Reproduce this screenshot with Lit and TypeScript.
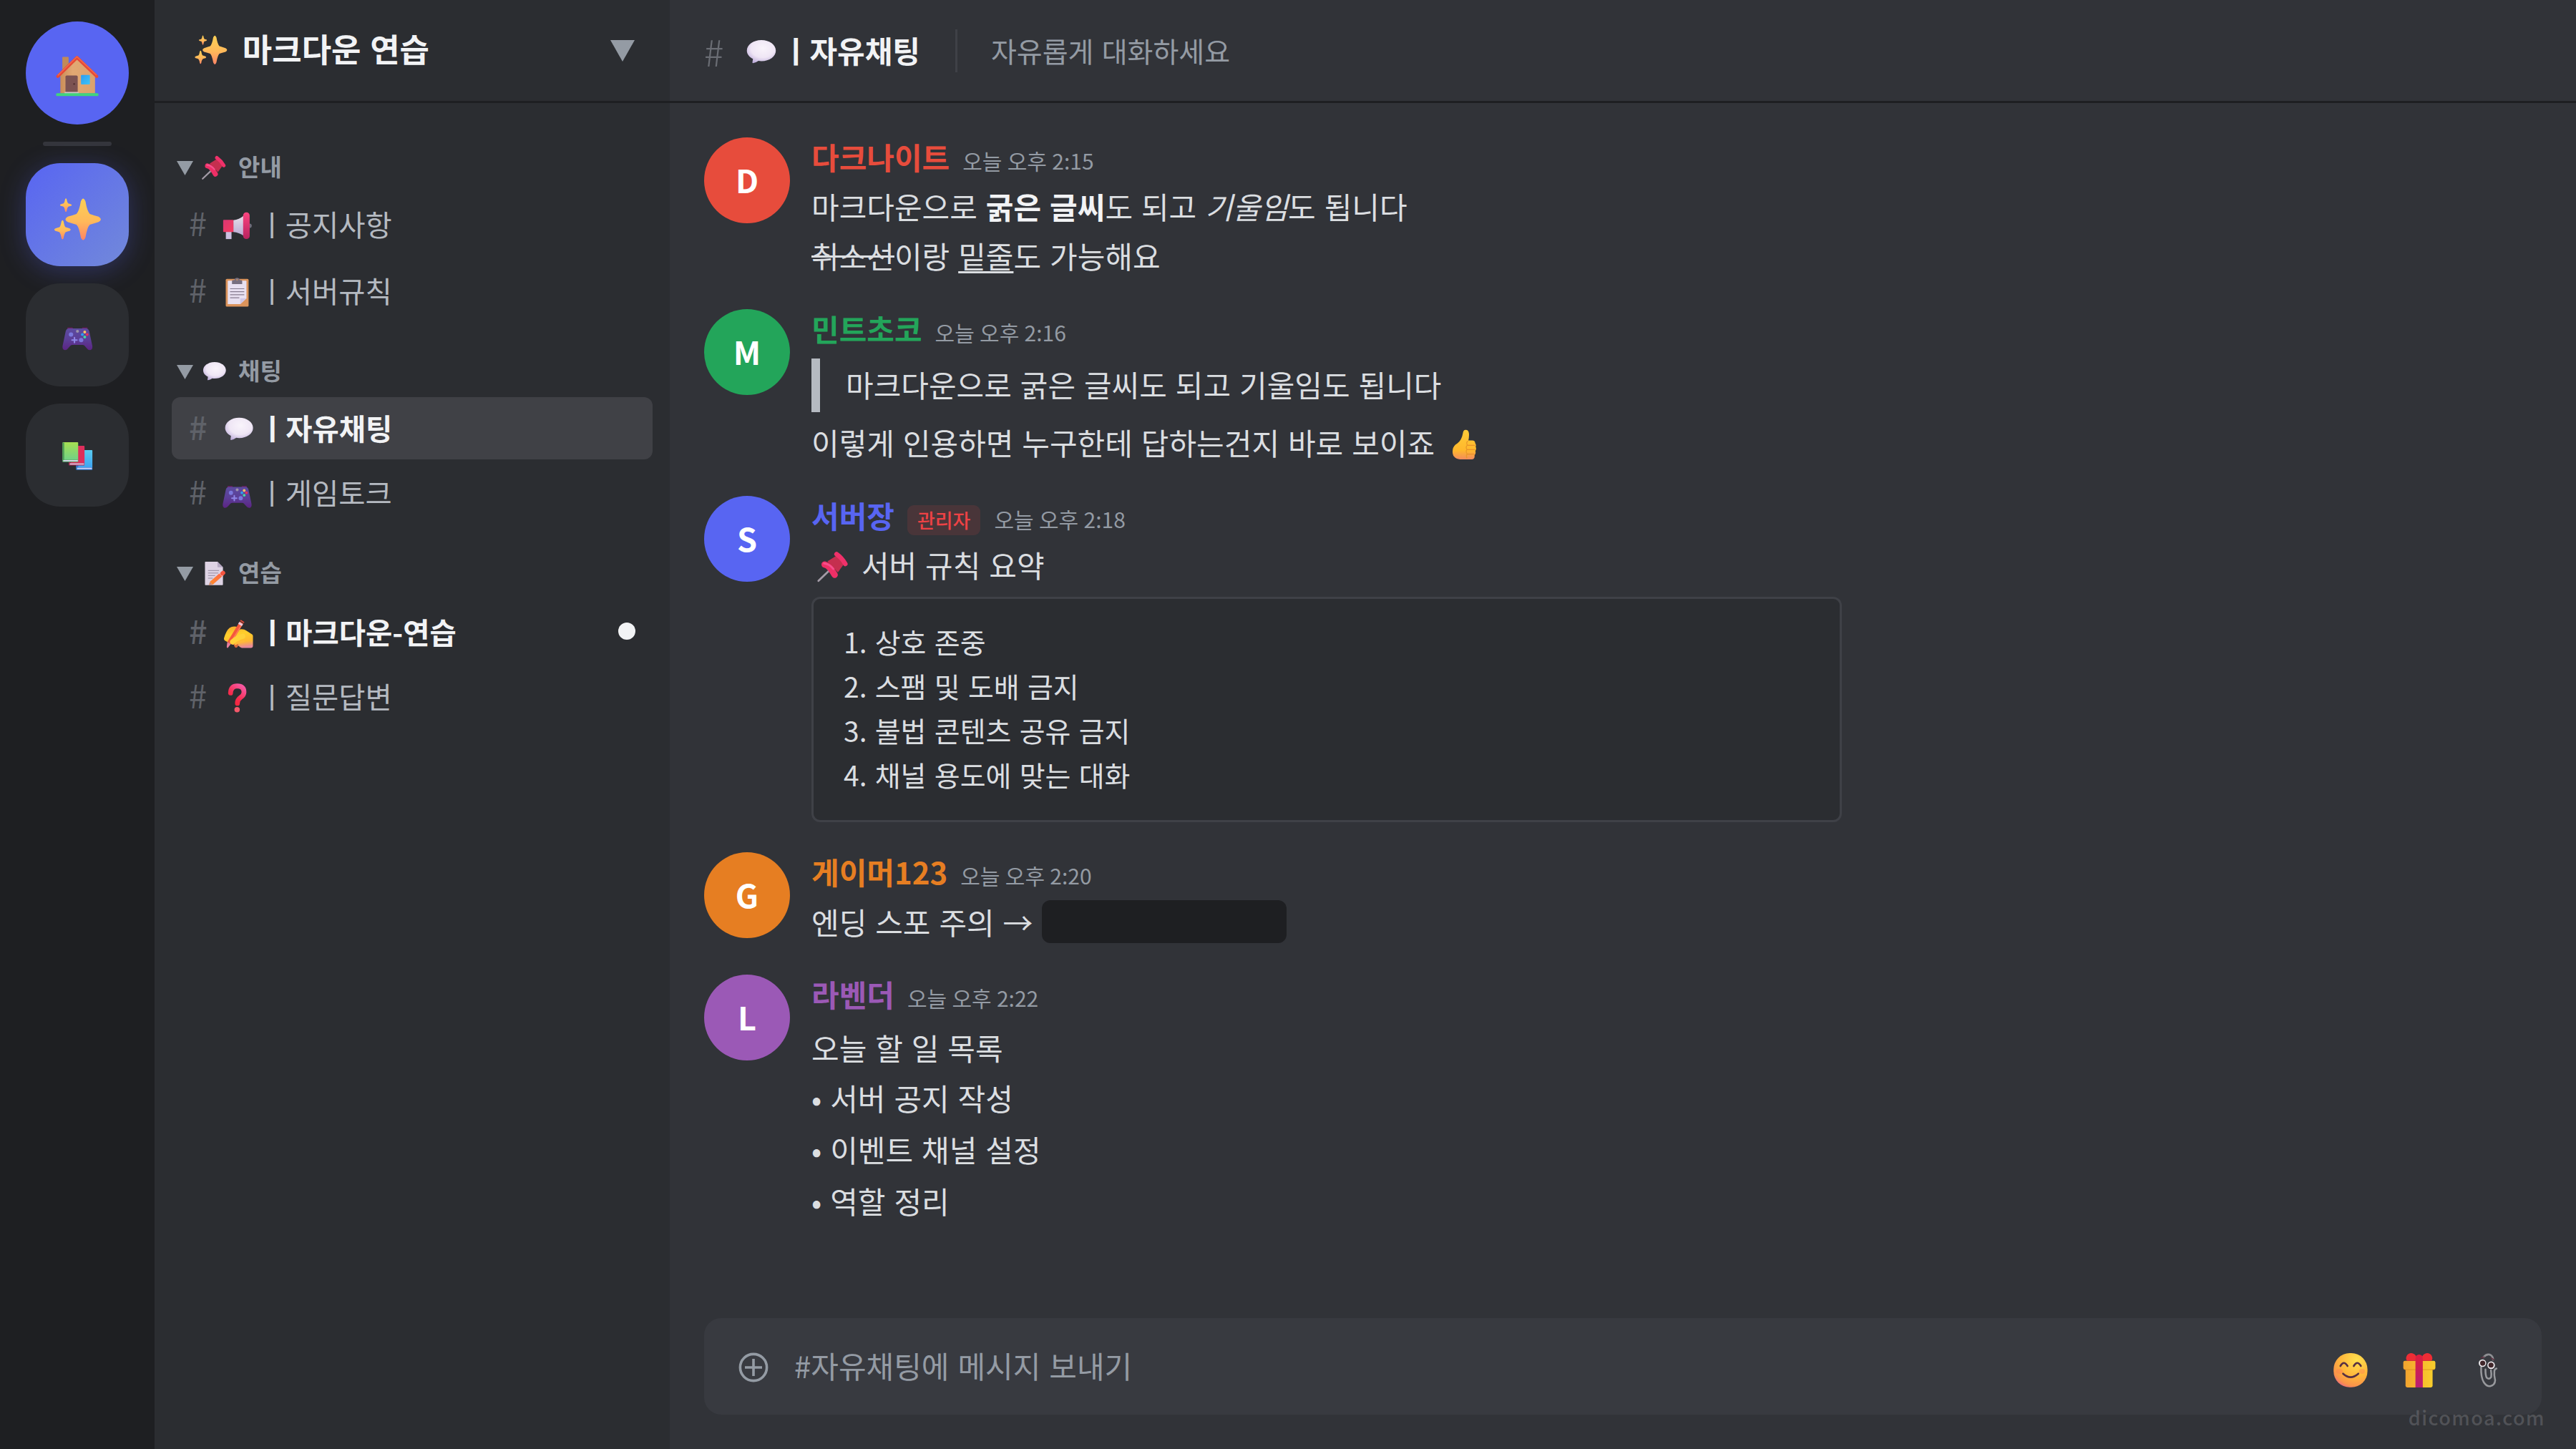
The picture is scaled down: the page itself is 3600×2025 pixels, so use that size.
import { LitElement, html, svg, css, nothing } from "lit";
import type { TemplateResult, SVGTemplateResult } from "lit";
import { customElement, property } from "lit/decorators.js";
import { classMap } from "lit/directives/class-map.js";

/* ---------- emoji artwork, all on a 32-unit grid ---------- */

const star = (cx: number, cy: number, rx: number, ry: number): string => {
  const tx = rx * 0.13;
  const ty = ry * 0.13;
  const wx = rx * 0.3;
  const wy = ry * 0.26;
  return [
    `M${cx - tx} ${cy - ry + ty}`,
    `Q${cx} ${cy - ry - ty} ${cx + tx} ${cy - ry + ty}`,
    `Q${cx + wx * 0.75} ${cy - wy * 1.5} ${cx + wx * 1.25} ${cy - wy}`,
    `Q${cx + rx * 0.6} ${cy - wy * 0.75} ${cx + rx - tx} ${cy - ty}`,
    `Q${cx + rx + tx} ${cy} ${cx + rx - tx} ${cy + ty}`,
    `Q${cx + rx * 0.6} ${cy + wy * 0.75} ${cx + wx * 1.25} ${cy + wy}`,
    `Q${cx + wx * 0.75} ${cy + wy * 1.5} ${cx + tx} ${cy + ry - ty}`,
    `Q${cx} ${cy + ry + ty} ${cx - tx} ${cy + ry - ty}`,
    `Q${cx - wx * 0.75} ${cy + wy * 1.5} ${cx - wx * 1.25} ${cy + wy}`,
    `Q${cx - rx * 0.6} ${cy + wy * 0.75} ${cx - rx + tx} ${cy + ty}`,
    `Q${cx - rx - tx} ${cy} ${cx - rx + tx} ${cy - ty}`,
    `Q${cx - rx * 0.6} ${cy - wy * 0.75} ${cx - wx * 1.25} ${cy - wy}`,
    `Q${cx - wx * 0.75} ${cy - wy * 1.5} ${cx - tx} ${cy - ry + ty}Z`,
  ].join("");
};

const ART: Record<string, SVGTemplateResult> = {
  home: svg`
    <defs>
      <linearGradient id="g" x1="0" x2="1"><stop offset="0" stop-color="#c98d58"/><stop offset=".35" stop-color="#e2a873"/><stop offset="1" stop-color="#dba26c"/></linearGradient>
      <linearGradient id="w" x1="0" x2="1" y2="1"><stop offset="0" stop-color="#2b9df0"/><stop offset="1" stop-color="#3fc4f8"/></linearGradient>
    </defs>
    <rect x="5.6" y="2.8" width="4.4" height="12" rx=".4" fill="#c18a58"/>
    <path d="M15.8 4.4 28.6 16.2V28.4H4.2V15.8Z" fill="url(#g)"/>
    <path d="M2.4 16.5 15.9 3.2 29.8 16.5" fill="none" stroke="#e64a36" stroke-width="2.2" stroke-linecap="round" stroke-linejoin="round"/>
    <path d="M2.6 15.6 15.9 2.6 29.4 15.4" fill="none" stroke="#f46a4c" stroke-width=".7" stroke-linecap="round" stroke-linejoin="round"/>
    <rect x="7.8" y="15.8" width="8.6" height="12.6" rx=".9" fill="#7c5352"/>
    <circle cx="13.9" cy="21.8" r=".6" fill="#4c2c2e"/>
    <rect x="18.7" y="15.5" width="6.3" height="6.7" rx=".5" fill="url(#w)"/>
    <rect x="7.2" y="27.4" width="9.8" height="1.2" fill="#cfc6cc"/>
    <rect x="1.2" y="28.3" width="29.8" height="2" rx=".8" fill="#41d47c"/>`,
  sparkles: svg`
    <defs><linearGradient id="g" x1="0" x2="0" y1="0" y2="1"><stop offset="0" stop-color="#fcd055"/><stop offset=".55" stop-color="#ffb95a"/><stop offset="1" stop-color="#ff8566"/></linearGradient></defs>
    <path d="${star(19.6, 16, 11.5, 13.5)}" fill="url(#g)"/>
    <path d="${star(8.4, 6.8, 3.8, 4.4)}" fill="url(#g)"/>
    <path d="${star(6.2, 22.8, 5.3, 6.2)}" fill="url(#g)"/>`,
  gamepad: svg`
    <defs><linearGradient id="g" x1="0" x2="0" y1="0" y2="1"><stop offset="0" stop-color="#5c4ba0"/><stop offset=".5" stop-color="#5b3f97"/><stop offset="1" stop-color="#5c2484"/></linearGradient></defs>
    <path d="M6.4 8.3h4.4M21.2 8.3h4.4" stroke="#6d1d63" stroke-width="1.2" stroke-linecap="round"/>
    <path d="M7.4 8.6H24.6Q27 8.6 27.8 11.4L31 26.4Q31.3 30.1 28.6 30.4 26.7 30.5 25.4 28.6L23 25.9Q22.3 25.2 21 25.2H11Q9.7 25.2 9 25.9L6.600 28.600Q5.300 30.500 3.400 30.400.7 30.100 1 26.400L4.200 11.400Q5 8.600 7.400 8.600Z" fill="url(#g)"/>
    <circle cx="9.5" cy="14.7" r="2.200" fill="#7a78dc"/><circle cx="19.700" cy="20.300" r="2.200" fill="#7a78dc"/>
    <path d="M10.500 20.300h5M13 17.800v5" stroke="#8f86e8" stroke-width="1.500" stroke-linecap="round"/>
    <circle cx="16" cy="11.500" r="1.500" fill="#9c93ab"/>
    <circle cx="23.300" cy="12.300" r="1.450" fill="#f9c166"/><circle cx="20.900" cy="14.700" r="1.400" fill="#2f9ef0"/>
    <circle cx="25.700" cy="14.700" r="1.400" fill="#e2315f"/><circle cx="23.300" cy="17.200" r="1.450" fill="#45d6a4"/>`,
  books: svg`
    <defs>
      <linearGradient id="g" x1="0" x2="0" y1="0" y2="1"><stop offset="0" stop-color="#a6e052"/><stop offset="1" stop-color="#6bd08c"/></linearGradient>
      <linearGradient id="b" x1="0" x2="0" y1="0" y2="1"><stop offset="0" stop-color="#5accf0"/><stop offset="1" stop-color="#3a9ff2"/></linearGradient>
    </defs>
    <rect x="14.800" y="10" width="16.200" height="19.900" rx=".6" fill="url(#b)"/>
    <path d="M14.800 25h2v2.400h14v2.500h-16Z" fill="#3572cf"/>
    <rect x="15.600" y="27.800" width="14.900" height="1.400" fill="#cfd6f6"/>
    <rect x="7.500" y="5.800" width="15.600" height="19.600" rx=".6" fill="#de2f5c"/>
    <path d="M7.500 20h2v3h13.500v2.400H7.500Z" fill="#a3234f"/>
    <rect x="8.300" y="23.400" width="14.400" height="1.300" fill="#e6cfe6"/>
    <rect x="1" y="2.200" width="15.700" height="19.800" rx=".6" fill="url(#g)"/>
    <path d="M1 2.600h1.700v17.200h14v2.200H1Z" fill="#4d9b58"/>
    <rect x="1.700" y="20.100" width="14.700" height="1.300" fill="#d9dcf0"/>`,
  pin: svg`
    <path d="M2 30 12.500 20" stroke="#a39ba6" stroke-width="2" stroke-linecap="round"/>
    <path d="M11 10.500 20.500 4.500 28 12.500 21.500 21.500Z" fill="#c52f4f"/>
    <path d="M8.200 13.600Q13 14.500 18.300 24" fill="none" stroke="#ee2f66" stroke-width="6.400" stroke-linecap="round"/>
    <path d="M7.600 12.500Q13 13 17 18" fill="none" stroke="#f5508c" stroke-width="2" stroke-linecap="round"/>
    <path d="M20.200 3.200Q25.500 7 29 13" fill="none" stroke="#f0316a" stroke-width="4.600" stroke-linecap="round"/>`,
  megaphone: svg`
    <defs>
      <linearGradient id="g" x1="0" x2="0" y1="0" y2="1"><stop offset="0" stop-color="#fb4580"/><stop offset="1" stop-color="#b8225f"/></linearGradient>
      <linearGradient id="b" x1="0" x2="1" y1="0" y2="1"><stop offset="0" stop-color="#d93673"/><stop offset="1" stop-color="#f63b5f"/></linearGradient>
      <linearGradient id="c" x1="0" x2="0" y1="0" y2="1"><stop offset="0" stop-color="#e6dee8"/><stop offset="1" stop-color="#b9abd4"/></linearGradient>
    </defs>
    <circle cx="28.900" cy="16" r="2.300" fill="#6f6c7a"/>
    <path d="M4.200 22h5.900v7.900H4.200Z" fill="#cbbfe0"/>
    <path d="M12 10.200Q18 9.500 22.800 5.600V26.400Q18 23 12 22.500Z" fill="url(#c)"/>
    <rect x="1.400" y="9.800" width="10.700" height="12.700" rx=".7" fill="url(#b)"/>
    <rect x="22.200" y="2.100" width="6.800" height="27.800" rx="3.300" fill="url(#g)"/>`,
  clipboard: svg`
    <rect x="4.100" y="2" width="23.800" height="29" rx="1.200" fill="#dc945c"/>
    <path d="M6.200 4.600Q6.200 4 6.900 4H25Q25.700 4 25.700 4.600V22.300L19.200 28.300H6.200Z" fill="#e8e0f1"/>
    <path d="M19.200 28.300V22.300H25.700Z" fill="#d0c6e6"/>
    <path d="M8.600 12.300H23.400M8.600 15.400H23.400M8.600 18.500H23.400M8.600 21.700H18.200" stroke="#857b90" stroke-width=".85"/>
    <path d="M10.600 7.500V4.300Q10.600 3.500 12 3.400L13.200 3.200Q13.600 1 15.900 1 18.200 1 18.600 3.200L19.800 3.400Q21.200 3.500 21.200 4.300V7.500Z" fill="#786f80"/>
    <circle cx="15.900" cy="3" r=".9" fill="#b78963"/>`,
  bubble: svg`
    <defs><radialGradient id="g" cx=".55" cy=".35" r=".68"><stop offset="0" stop-color="#f9f4fb"/><stop offset=".6" stop-color="#efe6f5"/><stop offset="1" stop-color="#bfaedb"/></radialGradient></defs>
    <path d="M17.300 3.600C25.500 3.600 31.800 8.300 31.800 14.200S25.500 24.800 17.300 24.800Q15.600 24.800 14.300 24.500 11.700 26.500 8.900 26.800 8 26.800 8.300 25.800L8.800 22.500C5 20.600 2.700 17.600 2.700 14.200 2.700 8.300 9.100 3.600 17.300 3.600Z" fill="url(#g)"/>`,
  memo: svg`
    <defs><linearGradient id="p" x1="1" x2="0" y1="0" y2="1"><stop offset="0" stop-color="#ff6a45"/><stop offset="1" stop-color="#ff8a2e"/></linearGradient></defs>
    <path d="M5 1.700Q5 1 5.700 1H21L28 8V30Q28 30.800 27.300 30.800H5.700Q5 30.800 5 30Z" fill="#ded3e4"/>
    <path d="M21 1V7.200Q21 8 21.800 8H28Z" fill="#b5a8c2"/>
    <path d="M9 12.200H23M9 15.400H22M9 18.600H18M9 22H15" stroke="#93889e" stroke-width=".9"/>
    <path d="M13 28.500 25.500 17.500" stroke="url(#p)" stroke-width="5.200"/>
    <path d="M25 18 27 16.200" stroke="#f0cfdc" stroke-width="5.400"/>
    <path d="M27.300 16 28.200 15.200" stroke="#f4543f" stroke-width="5.400" stroke-linecap="round"/>
    <path d="M11.300 26.600 14.800 30.400 9.800 31Z" fill="#c98a72"/>`,
  writing: svg`
    <defs><linearGradient id="g" x1=".3" x2=".5" y1="0" y2="1"><stop offset="0" stop-color="#f5ac2c"/><stop offset=".35" stop-color="#ffcf2b"/><stop offset=".75" stop-color="#ffb931"/><stop offset="1" stop-color="#e88a9a"/></linearGradient></defs>
    <path d="M1.600 20.500Q4 12.500 7.300 10 10.500 7.800 14.500 8.800L18 11.500Q22 10.800 25 13L31 17Q31.700 17.600 31.700 18.600V28.500Q31.700 30.900 29.500 30.900H21.500Q18.500 30.900 17 28.800L9 27 3.500 23.800Q1 23 1.600 20.500Z" fill="url(#g)"/>
    <path d="M11.800 26.500h4.600q0 4-2.300 4.300-2.200-.3-2.300-4.300Z" fill="#d9683e"/>
    <path d="M6.800 25.800 19.800 4.500" stroke="#f5573c" stroke-width="4.200"/>
    <path d="M8 26.400 19.500 7.500" stroke="#ff7d55" stroke-width="1.200"/>
    <path d="M18.200 7 19.400 5" stroke="#ecc6dc" stroke-width="4.500"/>
    <path d="M20.200 3.900 20.900 2.800" stroke="#ee4b36" stroke-width="4.500" stroke-linecap="butt"/>
    <path d="M5 24.700 8.600 26.900 5.300 31.200Q4 30.500 4.400 29Z" fill="#e87f9c"/>
    <path d="M10.500 24.500Q15.500 20 21 18.800" stroke="#ffd23a" stroke-width="5.400" fill="none" stroke-linecap="round"/>
    <path d="M13.500 27Q17 24.500 22 24" stroke="#ffba3a" stroke-width="2" fill="none" stroke-linecap="round"/>`,
  question: svg`
    <defs><linearGradient id="g" x1=".8" x2=".2" y1="0" y2="1"><stop offset="0" stop-color="#f6569e"/><stop offset=".6" stop-color="#f52d50"/><stop offset="1" stop-color="#f5253c"/></linearGradient></defs>
    <path d="M9.100 10.800Q9.500 3.500 16 3.500 23.100 3.700 23.100 9.800 23.100 13 19.500 15.500 16.200 17.800 16.200 21.600" fill="none" stroke="url(#g)" stroke-width="5" stroke-linecap="round"/>
    <circle cx="15.900" cy="28.100" r="2.800" fill="#f4586a"/>`,
  thumb: svg`
    <defs><linearGradient id="g" x1="0" x2="0" y1="0" y2="1"><stop offset="0" stop-color="#ffcc38"/><stop offset=".7" stop-color="#ffb72c"/><stop offset="1" stop-color="#f28b5e"/></linearGradient></defs>
    <path d="M17.400 1.300Q20.400 1.200 20.800 5 21 8.500 20.200 11.800H24Q27 12 27 14.500 28.300 16 27.500 18.300 28.600 20 27.200 22.500 28 25 26.400 26.600 26.900 30.800 23.500 30.900H12Q4.400 30 4.300 23.500 4.200 17.500 9 15 13.500 11.500 14.600 5 15 1.400 17.400 1.300Z" fill="url(#g)"/>
    <path d="M19.500 16.800H26.500M19 21.200H26.500M19 25.600H26" stroke="#e8912a" stroke-width=".9" stroke-linecap="round"/>
    <path d="M19.800 12.500Q17.500 14 19.200 16.500 17 18.500 18.800 21 17.200 23 18.900 25.500 17.500 27.500 18.800 29.800" fill="none" stroke="#e8982a" stroke-width=".9"/>`,
  smile: svg`
    <defs><radialGradient id="g" cx=".68" cy=".2" r=".9"><stop offset="0" stop-color="#ffe04d"/><stop offset=".55" stop-color="#ffb53b"/><stop offset=".85" stop-color="#f9934a"/><stop offset="1" stop-color="#e8648a"/></radialGradient></defs>
    <rect x=".8" y=".7" width="30.400" height="30.600" rx="14.400" fill="url(#g)"/>
    <ellipse cx="6" cy="17" rx="3" ry="2.400" fill="#ff7a55" opacity=".4"/><ellipse cx="26.300" cy="17" rx="2.600" ry="2.200" fill="#ff7a55" opacity=".4"/>
    <path d="M6.900 12.200Q9.900 6.800 13.300 12.200M18.900 12.200Q22 6.800 25.300 12.200M9.300 19.100Q16 25.300 23 19.100" fill="none" stroke="#573043" stroke-width="1.700" stroke-linecap="round"/>`,
  gift: svg`
    <defs>
      <linearGradient id="g" x1="0" x2="1"><stop offset="0" stop-color="#f2a32f"/><stop offset=".4" stop-color="#f7b42e"/><stop offset="1" stop-color="#f8ce2c"/></linearGradient>
      <linearGradient id="r" x1="0" x2="0" y1="0" y2="1"><stop offset="0" stop-color="#dd1f3c"/><stop offset="1" stop-color="#b81f74"/></linearGradient>
    </defs>
    <rect x="3.700" y="13" width="24.300" height="18.500" rx="1.600" fill="url(#g)"/>
    <rect x="1.700" y="7.600" width="28.800" height="7.800" rx="1.500" fill="url(#g)"/>
    <path d="M3 15.500H29.300" stroke="#d98a24" stroke-width=".5"/>
    <path d="M5 7.500Q3.500 5.500 4.800 3 6.500.3 9.800.8 12.500 1.500 13.500 4V7.500ZM27 7.500Q28.500 5.500 27.200 3 25.500.3 22.200.8 19.500 1.500 18.500 4V7.500Z" fill="#ee2d35"/>
    <path d="M12.600 31.500V6Q12.600 2 15.900 2T19.200 6V31.500Z" fill="url(#r)"/>`,
  clip: svg`
    <path d="M11.900 4.400Q15.500 .4 18.800 2.600 20.600 4 20.700 6.500" fill="none" stroke="#8e8f93" stroke-width="1.700" stroke-linecap="round"/>
    <path d="M9.900 13.400Q9.600 22.500 12.300 26.800 14.700 30.600 18 30.400 22.300 29.500 22.500 25 21.300 20.500 21.800 16.500 22.300 14.700 23.700 14.400" fill="none" stroke="#98999d" stroke-width="1.600" stroke-linecap="round"/>
    <path d="M13.800 15.200Q13.700 20.500 14.900 22.700 17 24.800 18.900 22.200 19.300 19 18.700 16" fill="none" stroke="#98999d" stroke-width="1.600" stroke-linecap="round"/>
    <path d="M10.200 4.900 12.600 4.200M18.900 5.200 21.300 6.600" stroke="#5c3040" stroke-width="1.100" stroke-linecap="round"/>
    <circle cx="11.100" cy="9.600" r="3.400" fill="#e9e6ea"/><circle cx="11.300" cy="9.700" r="2.300" fill="#40262a"/>
    <circle cx="18.900" cy="11.500" r="3.400" fill="#e9e6ea"/><circle cx="18.800" cy="11.400" r="2.300" fill="#40262a"/>`,
};

@customElement("ui-emoji")
export class UiEmoji extends LitElement {
  @property() name = "";

  static styles = css`
    :host {
      display: inline-flex;
      justify-content: center;
      width: 1.38em;
      height: 1.06em;
      vertical-align: -0.17em;
      flex: none;
    }
    .art {
      display: block;
      width: 1.06em;
      height: 1.06em;
      flex: none;
      overflow: visible;
    }
  `;

  render() {
    return html`<svg class="art" viewBox="0 0 32 32">${ART[this.name] ?? nothing}</svg>`;
  }
}

const emoji = (name: string): TemplateResult => html`<ui-emoji name=${name}></ui-emoji>`;

/* ---------- data ---------- */

interface Channel {
  icon: string;
  name: string;
  state?: "active" | "unread";
}
interface Category {
  icon: string;
  name: string;
  channels: Channel[];
}
interface Message {
  initial: string;
  author: string;
  tone: string;
  time: string;
  badge?: string;
  body: TemplateResult;
}

const CATEGORIES: Category[] = [
  {
    icon: "pin",
    name: "안내",
    channels: [
      { icon: "megaphone", name: "공지사항" },
      { icon: "clipboard", name: "서버규칙" },
    ],
  },
  {
    icon: "bubble",
    name: "채팅",
    channels: [
      { icon: "bubble", name: "자유채팅", state: "active" },
      { icon: "gamepad", name: "게임토크" },
    ],
  },
  {
    icon: "memo",
    name: "연습",
    channels: [
      { icon: "writing", name: "마크다운-연습", state: "unread" },
      { icon: "question", name: "질문답변" },
    ],
  },
];

const MESSAGES: Message[] = [
  {
    initial: "D",
    author: "다크나이트",
    tone: "red",
    time: "오늘 오후 2:15",
    body: html`
      <div class="line">마크다운으로 <b class="bold">굵은 글씨</b>도 되고 <i>기울임</i>도 됩니다</div>
      <div class="line"><s class="strike">취소선</s>이랑 <u class="under">밑줄</u>도 가능해요</div>
    `,
  },
  {
    initial: "M",
    author: "민트초코",
    tone: "green",
    time: "오늘 오후 2:16",
    body: html`
      <div class="quote">마크다운으로 굵은 글씨도 되고 기울임도 됩니다</div>
      <div class="line">이렇게 인용하면 누구한테 답하는건지 바로 보이죠 ${emoji("thumb")}</div>
    `,
  },
  {
    initial: "S",
    author: "서버장",
    tone: "blue",
    time: "오늘 오후 2:18",
    badge: "관리자",
    body: html`
      <div class="line">${emoji("pin")} 서버 규칙 요약</div>
      <div class="code">
        <div>1. 상호 존중</div>
        <div>2. 스팸 및 도배 금지</div>
        <div>3. 불법 콘텐츠 공유 금지</div>
        <div>4. 채널 용도에 맞는 대화</div>
      </div>
    `,
  },
  {
    initial: "G",
    author: "게이머123",
    tone: "orange",
    time: "오늘 오후 2:20",
    body: html`<div class="line spoil">엔딩 스포 주의 → <span class="spoiler"></span></div>`,
  },
  {
    initial: "L",
    author: "라벤더",
    tone: "purple",
    time: "오늘 오후 2:22",
    body: html`
      <div class="list">
        <div class="line">오늘 할 일 목록</div>
        <div class="bullet">• 서버 공지 작성</div>
        <div class="bullet">• 이벤트 채널 설정</div>
        <div class="bullet">• 역할 정리</div>
      </div>
    `,
  },
];

@customElement("app-root")
export class AppRoot extends LitElement {
  static styles = css`
    :host {
      display: grid;
      grid-template-columns: 216px 720px 1fr;
      position: relative;
      width: 3600px;
      height: 2025px;
      overflow: hidden;
      background: #313338;
      color: #dbdee1;
      font-family: "Noto Sans CJK KR", "Noto Sans", sans-serif;
      font-size: 42px;
      word-spacing: 0.06em;
      white-space: nowrap;
    }
    * {
      box-sizing: border-box;
    }

    /* server rail */
    .rail {
      display: flex;
      flex-direction: column;
      align-items: center;
      gap: 24px;
      padding-top: 30px;
      background: #1e1f22;
    }
    .server {
      display: flex;
      align-items: center;
      justify-content: center;
      width: 144px;
      height: 144px;
      border-radius: 48px;
      background: #2b2d31;
      font-size: 42px;
      padding-top: 3px;
    }
    .server.home {
      border-radius: 50%;
      background: #5865f2;
      font-size: 60px;
      padding-top: 7px;
    }
    .server.current {
      background: linear-gradient(135deg, #5865f2, #7289da);
      box-shadow: 0 6px 36px rgba(88, 101, 242, 0.3);
      font-size: 65px;
      padding-top: 13px;
    }
    .divider {
      width: 96px;
      height: 6px;
      border-radius: 3px;
      background: #35363c;
    }

    /* channel sidebar */
    .sidebar {
      display: flex;
      flex-direction: column;
      background: #2b2d31;
    }
    .bar {
      display: flex;
      align-items: center;
      flex: none;
      height: 144px;
      border-bottom: 3px solid #1e1f22;
      padding: 0 48px;
    }
    .guild {
      justify-content: space-between;
      font-size: 45px;
      font-weight: 700;
      color: #f2f3f5;
    }
    .guild-name {
      padding-bottom: 7px;
    }
    .caret {
      flex: none;
      display: block;
      fill: #949ba4;
    }
    .caret.big {
      width: 34px;
      height: 30px;
      margin-right: 1px;
    }
    .caret.small {
      width: 23px;
      height: 20px;
      margin-right: 6px;
      margin-top: 2px;
    }
    .categories {
      display: flex;
      flex-direction: column;
      gap: 45px;
      padding: 66px 24px 0;
    }
    .category:nth-child(3) .cat-head {
      margin-bottom: 15px;
    }
    .cat-head {
      display: flex;
      align-items: center;
      height: 48px;
      margin-bottom: 12px;
      padding-left: 7px;
      font-size: 33px;
      font-weight: 700;
      line-height: 48px;
      color: #949ba4;
    }
    .cat-name {
      padding-left: 11.5px;
      padding-bottom: 5px;
    }
    .channels {
      display: flex;
      flex-direction: column;
      gap: 3px;
    }
    .category:first-child .channels {
      gap: 6px;
    }
    .channel {
      display: flex;
      align-items: center;
      height: 87px;
      padding: 0 24px;
      border-radius: 12px;
      font-size: 40.5px;
      line-height: 60px;
      color: #b5bac1;
    }
    .channel-name {
      padding-bottom: 1px;
    }
    .channel-name ui-emoji {
      margin-right: 1.5px;
    }
    .hash {
      flex: none;
      font-size: 45px;
      color: #5f6269;
      padding-bottom: 6px;
      margin-right: 15px;
    }
    .channel.active {
      background: #404146;
    }
    .channel.active,
    .channel.unread {
      color: #f2f3f5;
      font-weight: 700;
    }
    .channel.active .hash,
    .channel.unread .hash {
      font-weight: 500;
    }
    .dot {
      width: 24px;
      height: 24px;
      margin-left: auto;
      margin-bottom: 3px;
      border-radius: 50%;
      background: #f2f3f5;
    }

    /* chat column */
    .chat {
      display: flex;
      flex-direction: column;
      min-width: 0;
    }
    .chat-hash {
      font-size: 51px;
      color: #6a6d74;
      font-weight: 300;
      margin-right: 22px;
    }
    .chat-title {
      font-weight: 700;
      color: #f2f3f5;
      padding-bottom: 2px;
    }
    .chat-title ui-emoji {
      margin-right: 1.5px;
    }
    .rule {
      width: 3px;
      height: 60px;
      margin: 0 47px 0 49px;
      background: #3f4147;
    }
    .topic {
      font-size: 39px;
      color: #949ba4;
      padding-bottom: 1px;
    }
    .messages {
      display: flex;
      flex-direction: column;
      gap: 40px;
      flex: 1;
      padding: 48px 48px 0;
    }
    .message {
      display: flex;
      gap: 30px;
      min-height: 120px;
    }
    .avatar {
      flex: none;
      display: flex;
      align-items: center;
      justify-content: center;
      width: 120px;
      height: 120px;
      border-radius: 50%;
      font-size: 45px;
      font-weight: 700;
      color: #fff;
      padding-bottom: 4px;
    }
    .avatar.red { background: #e74c3c; }
    .avatar.green { background: #23a55a; }
    .avatar.blue { background: #5865f2; }
    .avatar.orange { background: #e67e22; }
    .avatar.purple { background: #9b59b6; }
    .author.red { color: #e74c3c; }
    .author.green { color: #23a55a; }
    .author.blue { color: #5865f2; }
    .author.orange { color: #e67e22; }
    .author.purple { color: #9b59b6; }
    .content {
      flex: 1;
    }
    .head {
      display: flex;
      align-items: baseline;
      gap: 18px;
      height: 62px;
      line-height: 53px;
    }
    .author {
      font-weight: 600;
    }
    .badge {
      display: inline-block;
      padding: 0 14px;
      border-radius: 9px;
      background: rgba(237, 66, 69, 0.13);
      color: #ed4245;
      font-size: 27px;
      font-weight: 500;
      line-height: 42px;
      margin-right: 1px;
    }
    .time {
      font-size: 30px;
      word-spacing: 0.02em;
      color: #949ba4;
    }
    .line {
      height: 69px;
      line-height: 68px;
    }
    .bold {
      font-weight: 700;
      color: #f2f3f5;
    }
    .strike {
      text-decoration-thickness: 3px;
    }
    .under {
      text-decoration-thickness: 3px;
      text-underline-offset: 4px;
      text-decoration-skip-ink: none;
    }
    .quote {
      height: 75px;
      margin: 7px 0 8px;
      border-left: 12px solid #b5bac1;
      padding-left: 36px;
      line-height: 72px;
    }
    .code {
      width: 1440px;
      height: 315px;
      margin: 10px 0 2px;
      padding: 28px 42px 0;
      border: 3px solid #3f4147;
      border-radius: 12px;
      background: #2b2d31;
      font-size: 39px;
      line-height: 62px;
    }
    .spoil {
      display: flex;
      align-items: center;
      white-space: pre;
    }
    .spoiler {
      width: 342px;
      height: 60px;
      border-radius: 12px;
      background: #1e1f22;
    }
    .list {
      padding-top: 6px;
    }
    .bullet {
      height: 72px;
      line-height: 70px;
    }

    /* composer */
    .composer {
      display: flex;
      align-items: center;
      height: 135px;
      margin: 0 48px 48px;
      padding: 0 45px 0 48px;
      border-radius: 24px;
      background: #383a40;
      color: #949ba4;
    }
    .plus {
      flex: none;
      width: 42px;
      height: 42px;
      margin-right: 36px;
      margin-top: 3px;
      fill: none;
      stroke: #949ba4;
      stroke-width: 3.6;
    }
    .placeholder {
      flex: 1;
      padding-bottom: 4px;
    }
    .tools {
      display: flex;
      gap: 36px;
      font-size: 47px;
      padding-top: 11px;
    }
    .tool {
      display: flex;
      justify-content: center;
      width: 60px;
    }
    .watermark {
      position: absolute;
      right: 43px;
      bottom: 22px;
      font-size: 27px;
      font-weight: 500;
      line-height: 44px;
      letter-spacing: 1.5px;
      color: rgba(255, 255, 255, 0.17);
    }
  `;

  private renderCaret(size: string) {
    return html`<svg class="caret ${size}" viewBox="0 0 34 30" preserveAspectRatio="none">
      <path d="M0 0H34L17 30Z" />
    </svg>`;
  }

  private renderChannel(channel: Channel) {
    const classes = {
      channel: true,
      active: channel.state === "active",
      unread: channel.state === "unread",
    };
    return html`<div class=${classMap(classes)}>
      <span class="hash">#</span>
      <span class="channel-name">${emoji(channel.icon)}ㅣ${channel.name}</span>
      ${channel.state === "unread" ? html`<span class="dot"></span>` : nothing}
    </div>`;
  }

  private renderCategory(category: Category) {
    return html`<section class="category">
      <div class="cat-head">
        ${this.renderCaret("small")}${emoji(category.icon)}<span class="cat-name">${category.name}</span>
      </div>
      <div class="channels">${category.channels.map((c) => this.renderChannel(c))}</div>
    </section>`;
  }

  private renderMessage(m: Message) {
    return html`<article class="message">
      <div class="avatar ${m.tone}">${m.initial}</div>
      <div class="content">
        <div class="head">
          <span class="author ${m.tone}">${m.author}</span>
          ${m.badge ? html`<span class="badge">${m.badge}</span>` : nothing}
          <span class="time">${m.time}</span>
        </div>
        ${m.body}
      </div>
    </article>`;
  }

  render() {
    return html`
      <nav class="rail">
        <div class="server home">${emoji("home")}</div>
        <div class="divider"></div>
        <div class="server current">${emoji("sparkles")}</div>
        <div class="server">${emoji("gamepad")}</div>
        <div class="server">${emoji("books")}</div>
      </nav>
      <aside class="sidebar">
        <header class="bar guild">
          <span class="guild-name">${emoji("sparkles")} 마크다운 연습</span>
          ${this.renderCaret("big")}
        </header>
        <div class="categories">${CATEGORIES.map((c) => this.renderCategory(c))}</div>
      </aside>
      <main class="chat">
        <header class="bar">
          <span class="chat-hash">#</span>
          <span class="chat-title">${emoji("bubble")}ㅣ자유채팅</span>
          <span class="rule"></span>
          <span class="topic">자유롭게 대화하세요</span>
        </header>
        <div class="messages">${MESSAGES.map((m) => this.renderMessage(m))}</div>
        <footer class="composer">
          <svg class="plus" viewBox="0 0 42 42">
            <circle cx="21" cy="21" r="18.600" />
            <path d="M21 9V33M9 21H33" />
          </svg>
          <span class="placeholder">#자유채팅에 메시지 보내기</span>
          <div class="tools">
            <span class="tool">${emoji("smile")}</span>
            <span class="tool">${emoji("gift")}</span>
            <span class="tool">${emoji("clip")}</span>
          </div>
        </footer>
      </main>
      <div class="watermark">dicomoa.com</div>
    `;
  }
}
